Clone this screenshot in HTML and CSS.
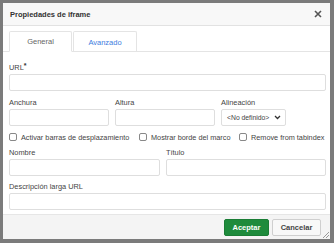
FILE: index.html
```html
<!DOCTYPE html>
<html lang="es">
<head>
    <meta charset="UTF-8">
    <title>Propiedades de iframe</title>
    <link rel="stylesheet" href="styles.css">
</head>
<body>
    <div class="dialog">
        <div class="title-bar">
            <span class="title">Propiedades de iframe</span>
            <svg class="close" width="8" height="8" viewBox="0 0 8 8"><path d="M1 1 L7 7 M7 1 L1 7" stroke="#555" stroke-width="1.6"/></svg>
        </div>

        <div class="tabs">
            <div class="tab active">General</div>
            <div class="tab">Avanzado</div>
        </div>

        <div class="content">
            <!-- url -->
            <div class="field url">
                <label>URL<sup>*</sup></label>
                <div class="input"></div>
            </div>

            <!-- medidas -->
            <div class="row">
                <div class="field w100">
                    <label>Anchura</label>
                    <div class="input"></div>
                </div>
                <div class="field w100">
                    <label>Altura</label>
                    <div class="input"></div>
                </div>
                <div class="field">
                    <label>Alineación</label>
                    <div class="select">&lt;No definido&gt;
                        <svg width="7" height="5" viewBox="0 0 7 5"><path d="M1 1 L3.5 3.5 L6 1" fill="none" stroke="#333" stroke-width="1.3"/></svg>
                    </div>
                </div>
            </div>

            <div class="checks">
                <div class="check"><span class="box"></span>Activar barras de desplazamiento</div>
                <div class="check"><span class="box"></span>Mostrar borde del marco</div>
                <div class="check"><span class="box"></span>Remove from tabindex</div>
            </div>

            <div class="row">
                <div class="field half">
                    <label>Nombre</label>
                    <div class="input"></div>
                </div>
                <div class="field grow">
                    <label>Título</label>
                    <div class="input"></div>
                </div>
            </div>

            <div class="field">
                <label>Descripción larga URL</label>
                <div class="input"></div>
            </div>
        </div>

        <div class="footer">
            <button class="btn ok">Aceptar</button>
            <button class="btn">Cancelar</button>
            <svg class="grip" width="6" height="6" viewBox="0 0 6 6"><path d="M6 0 L0 6 M6 3 L3 6" stroke="#999" stroke-width="1"/></svg>
        </div>
    </div>
</body>
</html>
```

FILE: styles.css
```css
*{
    margin: 0;
    padding: 0;
    box-sizing: border-box;
    font-family: "Liberation Sans", Arial, sans-serif;
}

body{
    background-color: #7b7b7b;
    padding: 3px 4px 4px 3px;
    height: 243px;
    overflow: hidden;
}

.dialog{
    background: #fff;
    width: 327px;
    height: 236px;
    display: flex;
    flex-direction: column;
}

.title-bar{
    height: 23px;
    background: #f8f8f8;
    border-bottom: 1px solid #e2e2e2;
    display: flex;
    align-items: center;
    justify-content: space-between;
    padding: 0 8px 0 7px;
    flex-shrink: 0;
}

.title{
    font-size: 7.5px;
    font-weight: bold;
    color: #333;
}

.tabs{
    display: flex;
    padding: 5px 0 0 6px;
    border-bottom: 1px solid #e4e4e4;
    height: 26px;
    flex-shrink: 0;
}

.tab{
    width: 64px;
    height: 21px;
    margin-bottom: -1px;
    font-size: 7.5px;
    color: #3d7de0;
    display: flex;
    align-items: center;
    justify-content: center;
    border: 1px solid #e4e4e4;
    border-bottom: 0;
    margin-left: 1px;
    border-radius: 2px 2px 0 0;
}

.tab.active{
    width: 63px;
    margin-left: 0;
    color: #666;
    background: #fff;
    border-bottom: 1px solid #fff;
}

.content{
    flex: 1;
    padding: 11px 4px 0 6px;
    display: flex;
    flex-direction: column;
    gap: 6px;
}

.field{
    display: flex;
    flex-direction: column;
    gap: 1px;
}

.url{
    margin-bottom: 1px;
}

label{
    font-size: 7.4px;
    line-height: 10px;
    color: #444;
    white-space: nowrap;
}

label sup{
    font-size: 7px;
    font-weight: bold;
    color: #333;
    vertical-align: 2px;
    line-height: 0;
}

.input{
    height: 17px;
    border: 1px solid #dedede;
    border-radius: 2px;
    background: #fff;
}

.row{
    display: flex;
    gap: 6px;
}

.w100{
    width: 100px;
}

.half{
    width: 151px;
}

.grow{
    flex: 1;
}

.select{
    height: 17px;
    width: 65px;
    border: 1px solid #dedede;
    border-radius: 2px;
    font-size: 6.8px;
    color: #444;
    display: flex;
    align-items: center;
    justify-content: space-between;
    padding: 0 4px 0 5px;
    white-space: nowrap;
}

.checks{
    display: grid;
    grid-template-columns: 130px 100px auto;
    font-size: 7.3px;
    color: #444;
    height: 10px;
    align-items: center;
    white-space: nowrap;
}

.check{
    display: flex;
    align-items: center;
    gap: 4px;
}

.box{
    width: 8px;
    height: 8px;
    border: 1px solid #888;
    border-radius: 2px;
}

.footer{
    height: 25px;
    flex-shrink: 0;
    background: #f4f4f4;
    border-top: 1px solid #e6e6e6;
    display: flex;
    align-items: center;
    justify-content: flex-end;
    gap: 3px;
    padding-right: 9px;
    position: relative;
}

.btn{
    height: 17px;
    width: 49px;
    font-size: 7.5px;
    font-weight: bold;
    color: #444;
    background: #f8f8f8;
    border: 1px solid #cfcfcf;
    border-radius: 2px;
}

.btn.ok{
    width: 45px;
    color: #fff;
    background: #1e8b3c;
    border-color: #1a7d35;
}

.grip{
    position: absolute;
    right: 1px;
    bottom: 1px;
}
```
